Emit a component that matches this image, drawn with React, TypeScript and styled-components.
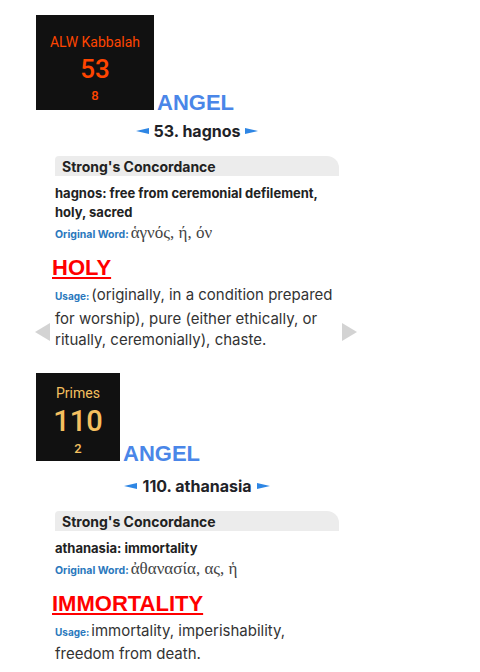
import React from "react";
import styled, { createGlobalStyle } from "styled-components";

const Global = createGlobalStyle`
  html, body { margin: 0; padding: 0; background: #ffffff; }
  body { font-family: Inter, Roboto, "Liberation Sans", Arial, sans-serif; color: #222; }
`;

const Page = styled.div`
  position: relative;
  width: 322px;
  padding: 15px 0 0 36px;
`;

const Section = styled.section`
  display: flex;
  flex-direction: column;
  margin-bottom: 22px;
`;

const Header = styled.div`
  display: flex;
  align-items: flex-end;
  gap: 3px;
`;

const Badge = styled.div<{ $w: number; $h: number; $pad: number }>`
  width: ${(p) => p.$w}px;
  height: ${(p) => p.$h}px;
  box-sizing: border-box;
  padding-top: ${(p) => p.$pad}px;
  background: #111111;
  display: flex;
  flex-direction: column;
  align-items: center;
  font-family: Roboto, "Liberation Sans", Arial, sans-serif;
`;

const BadgeTitle = styled.div<{ $c: string }>`
  font-size: 14px;
  line-height: 20px;
  color: ${(p) => p.$c};
`;

const BadgeValue = styled.div<{ $c: string; $size: number; $mt: number }>`
  font-size: ${(p) => p.$size}px;
  line-height: ${(p) => p.$size + 3}px;
  margin-top: ${(p) => p.$mt}px;
  font-weight: 500;
  color: ${(p) => p.$c};
`;

const BadgeSub = styled.div<{ $c: string; $mt: number }>`
  font-size: 13px;
  line-height: 16px;
  margin-top: ${(p) => p.$mt}px;
  font-weight: 500;
  color: ${(p) => p.$c};
`;

const Word = styled.div`
  font-family: "Liberation Sans", Arial, sans-serif;
  font-weight: bold;
  font-size: 22px;
  line-height: 22px;
  margin-bottom: -4px;
  color: #4a86e8;
`;

const Nav = styled.div<{ $mt: number }>`
  display: flex;
  justify-content: center;
  align-items: center;
  gap: 5px;
  margin-top: ${(p) => p.$mt}px;
  font-size: 16px;
  line-height: 20px;
  font-weight: bold;
  color: #1f2328;
`;

const Card = styled.div`
  margin: 15px 19px 0 19px;
  display: flex;
  flex-direction: column;
`;

const CardBar = styled.div`
  height: 20px;
  background: #ececec;
  border-radius: 4px 12px 0 0;
  padding-left: 7px;
  font-size: 14px;
  line-height: 21px;
  font-weight: bold;
  color: #222;
`;

const Definition = styled.div`
  margin-top: 8px;
  font-size: 13px;
  line-height: 19px;
  font-weight: bold;
  color: #222;
`;

const Label = styled.span<{ $size: number }>`
  font-size: ${(p) => p.$size}px;
  font-weight: bold;
  color: #2a78bd;
  margin-right: 2px;
`;

const Original = styled.div`
  margin-top: 0;
  height: 20px;
  line-height: 20px;
`;

const Greek = styled.span`
  font-family: "Liberation Serif", "DejaVu Serif", serif;
  font-size: 17px;
  color: #444;
`;

const Meaning = styled.div`
  margin: 13px 0 0 -3px;
  font-family: "Liberation Sans", Arial, sans-serif;
  font-weight: bold;
  font-size: 22px;
  line-height: 26px;
  color: #ff0000;
  text-decoration: underline;
  text-decoration-thickness: 2px;
  text-underline-offset: 2px;
`;

const Usage = styled.div`
  margin-top: 3px;
  font-size: 15px;
  line-height: 21.5px;
  color: #333;
`;

const UsageText = styled.span`
  color: #333;
`;

const Slide = styled.div<{ $side: "left" | "right" }>`
  position: absolute;
  top: 323px;
  ${(p) => (p.$side === "left" ? "left: 35px;" : "left: 342px;")}
  width: 0;
  height: 0;
  border-top: 9px solid transparent;
  border-bottom: 9px solid transparent;
  ${(p) =>
    p.$side === "left"
      ? "border-right: 15px solid #d3d3d3;"
      : "border-left: 15px solid #d3d3d3;"}
`;

const Arrow = ({ dir }: { dir: "l" | "r" }) => (
  <svg width="13" height="8" viewBox="0 0 13 8">
    <polygon
      points={dir === "l" ? "0,4 13,1 13,7" : "13,4 0,1 0,7"}
      fill="#2e86e4"
    />
  </svg>
);

type Entry = {
  badge: { title: string; value: string; sub: string; color: string; w: number; h: number; pad: number; size: number; vmt: number; smt: number };
  nav: string;
  navTop: number;
  def: string;
  greek: string;
  meaning: string;
  usage: string;
};

const entries: Entry[] = [
  {
    badge: { title: "ALW Kabbalah", value: "53", sub: "8", color: "#ff4500", w: 118, h: 95, pad: 17, size: 26, vmt: 3, smt: 4 },
    nav: "53. hagnos",
    navTop: 11,
    def: "hagnos: free from ceremonial defilement, holy, sacred",
    greek: "ἁγνός, ή, όν",
    meaning: "HOLY",
    usage: "(originally, in a condition prepared for worship), pure (either ethically, or ritually, ceremonially), chaste.",
  },
  {
    badge: { title: "Primes", value: "110", sub: "2", color: "#f5c060", w: 84, h: 88, pad: 10, size: 29, vmt: 2, smt: 4 },
    nav: "110. athanasia",
    navTop: 15,
    def: "athanasia: immortality",
    greek: "ἀθανασία, ας, ἡ",
    meaning: "IMMORTALITY",
    usage: "immortality, imperishability, freedom from death.",
  },
];

export default function App() {
  return (
    <>
      <Global />
      <Page>
        {entries.map((e) => (
          <Section key={e.nav}>
            <Header>
              <Badge $w={e.badge.w} $h={e.badge.h} $pad={e.badge.pad}>
                <BadgeTitle $c={e.badge.color}>{e.badge.title}</BadgeTitle>
                <BadgeValue $c={e.badge.color} $size={e.badge.size} $mt={e.badge.vmt}>
                  {e.badge.value}
                </BadgeValue>
                <BadgeSub $c={e.badge.color} $mt={e.badge.smt}>{e.badge.sub}</BadgeSub>
              </Badge>
              <Word>ANGEL</Word>
            </Header>
            <Nav $mt={e.navTop}>
              <Arrow dir="l" />
              <span>{e.nav}</span>
              <Arrow dir="r" />
            </Nav>
            <Card>
              <CardBar>Strong's Concordance</CardBar>
              <Definition>{e.def}</Definition>
              <Original>
                <Label $size={10.5}>Original Word:</Label>
                <Greek>{e.greek}</Greek>
              </Original>
              <Meaning>{e.meaning}</Meaning>
              <Usage>
                <Label $size={10}>Usage:</Label>
                <UsageText>{e.usage}</UsageText>
              </Usage>
            </Card>
          </Section>
        ))}
        <Slide $side="left" />
        <Slide $side="right" />
      </Page>
    </>
  );
}
